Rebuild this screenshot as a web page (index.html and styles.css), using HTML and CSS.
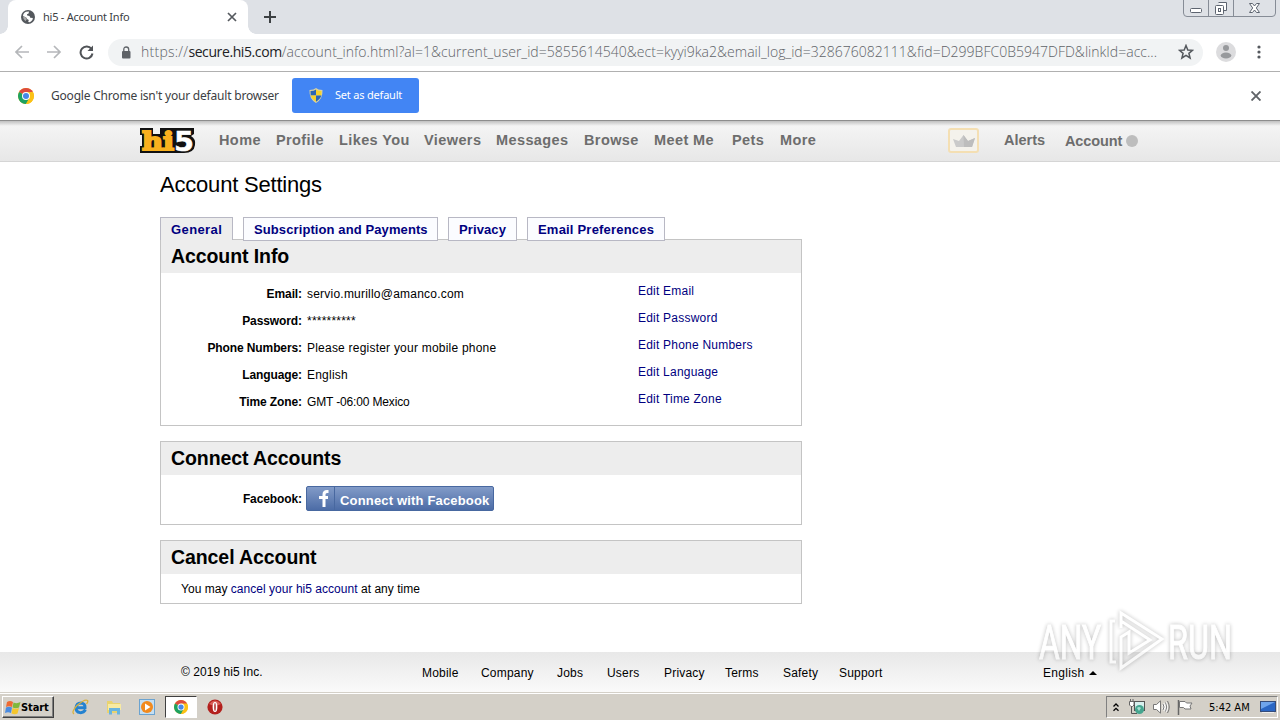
FILE: index.html
```html
<!DOCTYPE html>
<html lang="en">
<head>
  <meta charset="UTF-8" />
  <title>hi5 - Account Info</title>
  <link rel="stylesheet" href="styles.css">
</head>
<body>

  <!-- Shared icon -->
  <svg class="defs" width="0" height="0">
    <symbol id="chrome" viewBox="0 0 16 16">
      <circle cx="8" cy="8" r="8" fill="#fbc116"/>
      <path d="M8 8 L1.1 4 A8 8 0 0 1 14.9 4 Z" fill="#dd4b3e"/>
      <path d="M8 8 L1.1 4 A8 8 0 0 0 8 16 L11.4 10 Z" fill="#1da261"/>
      <path d="M8 4 L14.9 4 A8 8 0 0 1 8 16 L11.5 10 Z" fill="#fbc116"/>
      <circle cx="8" cy="8" r="4" fill="#fff"/>
      <circle cx="8" cy="8" r="3" fill="#4688e8"/>
    </symbol>
  </svg>

  <!-- Browser tabs -->
  <div class="tabstrip">
    <div class="tab">
      <svg width="14" height="14" viewBox="0 0 14 14"><circle cx="7" cy="7" r="7" fill="#54585d"/><path d="M2 6 Q2 3 5 1.7 L8 1.6 L7.6 3.4 L6 4.3 L6.2 5.6 L8.5 6 L9.3 7.8 L11.8 8 Q12 10.5 8.8 12.2 L7.2 12 L7.8 10 L6 9 L5.2 7.4 Z" fill="#fff"/><path d="M2 6.5 L5 7.6 L5.6 9.4 L4.5 11.3 Q2 9.4 2 6.5Z" fill="#aaa"/></svg>
      <span class="tab-title">hi5 - Account Info</span>
      <svg width="10" height="10" viewBox="0 0 10 10"><path d="M1 1 L9 9 M9 1 L1 9" stroke="#55595e" stroke-width="1.7"/></svg>
    </div>
    <svg class="new-tab" width="12" height="12" viewBox="0 0 12 12"><path d="M6 0 V12 M0 6 H12" stroke="#3c4043" stroke-width="2"/></svg>
    <svg class="window-buttons" width="94" height="18" viewBox="0 0 94 18" fill="none" stroke="#5d6470">
      <path d="M.5 0 V13 Q.5 16.5 4 16.5 H89 Q92.500 16.500 92.500 13 V0 M25.500 0 V16 M50.500 0 V16" stroke="#868c96"/>
      <rect x="7.500" y="8.500" width="11" height="4" rx="1" fill="#fff"/>
      <path d="M35.500 2.500 h8 v8 h-3" fill="#fff"/>
      <rect x="32.500" y="5.500" width="8" height="9" rx="1" fill="#fff"/>
      <rect x="35.500" y="8.500" width="2" height="3"/>
      <path d="M66.500 3.500 h3 l2 2.500 l2 -2.500 h3 l-3.200 4.500 l3.200 4.500 h-3 l-2 -2.500 l-2 2.500 h-3 l3.200 -4.500 z" fill="#fff"/>
    </svg>
  </div>

  <!-- Address bar -->
  <div class="toolbar">
    <svg class="nav-icons" width="80" height="16" viewBox="0 0 80 16" fill="none" stroke-width="1.700">
      <path d="M14 8 H1 M7 2 L1 8 L7 14" stroke="#b5b7ba"/>
      <path d="M32 8 H45 M39 2 L45 8 L39 14" stroke="#b5b7ba"/>
      <path d="M76.500 5 A6 6 0 1 0 77.500 9.500" stroke="#505357" stroke-width="2"/>
      <path d="M78 1.500 V7 H72.500 Z" fill="#505357"/>
    </svg>
    <div class="omnibox">
      <svg width="10" height="13" viewBox="0 0 10 13"><rect x="1" y="5" width="8.500" height="7.500" rx="1" fill="#5f6368"/><path d="M2.800 6 V3.500 Q2.800 1 5.200 1 Q7.700 1 7.700 3.500 V6" fill="none" stroke="#5f6368" stroke-width="1.300"/></svg>
      <span class="url"><span class="scheme">https://</span><b>secure.hi5.com</b><span class="path">/account_info.html?al=1&amp;current_user_id=5855614540&amp;ect=kyyi9ka2&amp;email_log_id=328676082111&amp;fid=D299BFC0B5947DFD&amp;linkId=acc...</span></span>
      <svg width="16" height="16" viewBox="0 0 16 16"><path d="M8 1.500 L9.800 6 L14.500 6.300 L10.900 9.300 L12.100 14 L8 11.400 L3.900 14 L5.100 9.300 L1.500 6.300 L6.200 6 Z" fill="none" stroke="#55595e" stroke-width="1.500"/></svg>
    </div>
    <svg class="avatar" width="20" height="20" viewBox="0 0 20 20"><circle cx="10" cy="10" r="10" fill="#dcdcde"/><circle cx="10" cy="6" r="3" fill="#97999c"/><ellipse cx="10" cy="13.500" rx="5.300" ry="3" fill="#97999c"/></svg>
    <svg width="4" height="14" viewBox="0 0 4 14" fill="#55595e"><circle cx="2" cy="2" r="1.600"/><circle cx="2" cy="7" r="1.600"/><circle cx="2" cy="12" r="1.600"/></svg>
  </div>

  <div class="infobar">
    <svg width="16" height="16"><use href="#chrome"/></svg>
    <span class="info-text">Google Chrome isn't your default browser</span>
    <div class="default-button">
      <svg width="14" height="15" viewBox="0 0 14 15"><path d="M7 0 Q9 2 13.500 2 Q14 11 7 15 Q0 11 .500 2 Q5 2 7 0Z" fill="#d9d3a4"/><path d="M7 1.500 V7.500 H1.700 L1.500 3 Q5 3 7 1.500Z" fill="#2b66b5"/><path d="M7 1.500 V7.500 H12.300 L12.500 3 Q9 3 7 1.500Z" fill="#f5d22c"/><path d="M7 7.500 V13.800 Q2.500 11 1.700 7.500Z" fill="#f5d22c"/><path d="M7 7.500 V13.800 Q11.500 11 12.300 7.500Z" fill="#2b66b5"/></svg>
      <span>Set as default</span>
    </div>
    <svg class="info-close" width="10" height="10" viewBox="0 0 10 10"><path d="M.500 .500 L9.500 9.500 M9.500 .500 L.500 9.500" stroke="#606468" stroke-width="1.900"/></svg>
  </div>

  <!-- Site header -->
  <div class="header">
    <svg class="logo" width="56" height="28" viewBox="0 0 56 28">
      <path d="M0 1 H13 V7 H20 V1 H54 V7 L51 9 Q56 12 55 18 Q54 26 44 26 H0 V19 H2 V8 H0Z" fill="#111"/>
      <text x="2" y="23" textLength="32" lengthAdjust="spacingAndGlyphs" class="logo-hi">hi</text>
      <text x="34" y="23.500" textLength="20" lengthAdjust="spacingAndGlyphs" class="logo-five">5</text>
    </svg>
    <div class="menu">
      <a>Home</a><a>Profile</a><a>Likes You</a><a>Viewers</a><a>Messages</a><a>Browse</a><a>Meet Me</a><a>Pets</a><a>More</a>
    </div>
    <div class="vip"><svg width="22" height="12" viewBox="0 0 22 12"><path d="M0 4 L6 6 L10.500 0 L15 6 L22 3 L19 12 H3Z" fill="#cacaca"/><path d="M10.500 0 L15 6 L22 3 L19 12 H11Z" fill="#bdbdbd"/></svg></div>
    <a class="alerts">Alerts</a>
    <a class="account">Account</a>
    <span class="dot"></span>
  </div>

  <div class="content">
    <h1>Account Settings</h1>
    <div class="tabs">
      <a class="active">General</a>
      <a class="subscription">Subscription and Payments</a>
      <a class="privacy">Privacy</a>
      <a class="preferences">Email Preferences</a>
    </div>

    <div class="panel info">
      <h2>Account Info</h2>
      <div class="row"><label>Email:</label><span>servio.murillo@amanco.com</span><a>Edit Email</a></div>
      <div class="row"><label>Password:</label><span>**********</span><a>Edit Password</a></div>
      <div class="row"><label>Phone Numbers:</label><span>Please register your mobile phone</span><a>Edit Phone Numbers</a></div>
      <div class="row"><label>Language:</label><span>English</span><a>Edit Language</a></div>
      <div class="row"><label>Time Zone:</label><span class="zone">GMT -06:00 Mexico</span><a>Edit Time Zone</a></div>
    </div>

    <div class="panel connect">
      <h2>Connect Accounts</h2>
      <div class="connect-row">
        <label>Facebook:</label>
        <div class="facebook">
          <span class="fb-icon"><svg width="10" height="17" viewBox="0 0 10 17"><path d="M9.500 1.500 H8 Q5 1.500 5 4.500 V17 M0 7.500 H9" fill="none" stroke="#fff" stroke-width="3"/></svg></span>
          <span class="fb-text">Connect with Facebook</span>
        </div>
      </div>
    </div>

    <div class="panel cancel">
      <h2>Cancel Account</h2>
      <p>You may <a>cancel your hi5 account</a> at any time</p>
    </div>
  </div>

  <!-- Footer -->
  <div class="footer">
    <span class="copyright">© 2019 hi5 Inc.</span>
    <div class="footer-links">
      <a>Mobile</a><a>Company</a><a>Jobs</a><a>Users</a><a>Privacy</a><a>Terms</a><a>Safety</a><a>Support</a>
    </div>
    <span class="language">English</span>
    <span class="arrow"></span>
  </div>

  <!-- Taskbar -->
  <div class="taskbar">
    <div class="start">
      <svg width="16" height="15" viewBox="0 0 16 15"><path d="M2 2 Q5 0 8 2 L7 7 Q4 5.500 1 7Z" fill="#ee6a32"/><path d="M8.500 2.500 Q12 4 15.500 2 L14 7.500 Q11 9 7.500 7.500Z" fill="#7fb83b"/><path d="M1 7.500 Q4 6 7 7.500 L6 13 Q3 11.500 0 13Z" fill="#4a8be0"/><path d="M7.500 8 Q11 9.500 14 8 L12.500 13.500 Q10 15 6.500 13.500Z" fill="#f5c62d"/></svg>
      <span>Start</span>
    </div>
    <svg class="ie" width="17" height="16" viewBox="0 0 17 16"><path d="M13.500 10.800 Q11.500 14 8 13.600 Q3.800 13 4 8.800 Q4.500 4 9 4 Q13.500 4.500 13 8.800 H5" fill="none" stroke="#2482d0" stroke-width="3"/><path d="M2 15 Q-1 13 5 6.500 Q13 -.500 15.500 1.500 Q16.500 2.500 14.500 5" fill="none" stroke="#d9b13c" stroke-width="1.300"/></svg>
    <svg class="folder" width="16" height="16" viewBox="0 0 16 16"><path d="M1 2 H6 L7 4 H14 V14 H1Z" fill="#e9d36f"/><path d="M2 5 H15 V11 H2Z" fill="#f7eaa2"/><path d="M3 9 H14 V15.500 H11 V12 H6 V15.500 H3Z" fill="#69b4df"/></svg>
    <svg class="player" width="16" height="16" viewBox="0 0 16 16"><rect x=".500" y=".500" width="15" height="15" fill="#c5dff2" stroke="#6ba3d0"/><circle cx="8" cy="8" r="6" fill="#f28a1d"/><path d="M6 4.500 L11.500 8 L6 11.500Z" fill="#fff"/></svg>
    <div class="chrome-task"><svg width="14" height="14"><use href="#chrome"/></svg></div>
    <svg class="opera" width="16" height="16" viewBox="0 0 16 16"><circle cx="8" cy="8" r="7.600" fill="#b3201d"/><path d="M2 5 Q8 -2 14 5 Q8 8 2 5" fill="#d9605a"/><ellipse cx="8" cy="8" rx="2.400" ry="5" fill="#fff"/><ellipse cx="8" cy="8" rx=".7" ry="4" fill="#a41615"/></svg>
    <div class="tray">
      <svg width="6" height="9" viewBox="0 0 6 9"><path d="M.500 3.500 L3 1 L5.500 3.500 M.500 7.800 L3 5.300 L5.500 7.800" fill="none" stroke="#000" stroke-width="1.300"/></svg>
      <svg class="network" width="16" height="16" viewBox="0 0 16 16"><rect x="5.500" y="2.500" width="10" height="9" fill="#d7f0ee" stroke="#555"/><path d="M2.500 7 V14.500 H8" fill="none" stroke="#555"/><path d="M.500 2.500 H5 V6 L3.500 7.500 H2 L.500 6Z M1.500 0 V3 M4 0 V3" fill="#fff" stroke="#666"/><circle cx="10.500" cy="10.500" r="4.500" fill="#45a58f"/><path d="M8 9 Q10 7 12 9 L10 12Z" fill="#a5ded0"/></svg>
      <svg class="volume" width="17" height="14" viewBox="0 0 17 14"><path d="M.500 4.500 H3.500 L7.500 .800 V13.200 L3.500 9.500 H.500Z" fill="#fff" stroke="#777"/><path d="M10 4 Q12 7 10 10 M12.500 2.500 Q15 7 12.500 11.500" fill="none" stroke="#fff" stroke-width="2.500"/><path d="M10 4 Q12 7 10 10 M12.500 2.500 Q15 7 12.500 11.500 M14.500 1 Q18 7 14.500 13" fill="none" stroke="#777"/></svg>
      <svg class="flag" width="16" height="15" viewBox="0 0 16 15"><path d="M1.500 0 V15" stroke="#666" stroke-width="1.500"/><path d="M2.500 1.500 H8 L9.500 3 H15 L13 6 L14 9 H8 L6.500 7.500 H2.500Z" fill="#fff" stroke="#777"/></svg>
      <span class="clock">5:42 AM</span>
      <svg class="desktop" width="16" height="12" viewBox="0 0 16 12"><rect x=".500" y=".500" width="15" height="10" fill="#2b67c4" stroke="#354c79"/><path d="M1 1 H15 L1 8Z" fill="#6fa5ec"/><path d="M2 11.500 H14" stroke="#eee"/></svg>
    </div>
  </div>

  <!-- Watermark over the page -->
  <svg class="watermark" width="230" height="76" viewBox="0 0 230 76">
    <g fill="none" stroke="#fff" stroke-width="3">
      <text x="10" y="55" textLength="62" lengthAdjust="spacingAndGlyphs">ANY</text>
      <text x="139" y="55" textLength="64" lengthAdjust="spacingAndGlyphs">RUN</text>
      <path d="M92 24 V9 L133 35 L92 64 V33 L100 28 V49 L121 36 L92 17 M86 17 H82 V58 H87"/>
    </g>
  </svg>

</body>
</html>
```
FILE: styles.css
```css
* { box-sizing: border-box; }
body { margin: 0; width: 1280px; height: 720px; overflow: hidden; background: #fff; font-family: "Liberation Sans", Arial, sans-serif; font-size: 12px; color: #000; display: flex; flex-direction: column; position: relative; }
svg { display: block; flex: none; }
.defs { position: absolute; }
a { color: #000080; white-space: nowrap; }

/* browser */
.tabstrip, .toolbar, .infobar { font-family: "Noto Sans", Tahoma, sans-serif; white-space: nowrap; }
.tabstrip { height: 34px; flex: none; background: #dee1e6; display: flex; padding-left: 8px; }
.tab { width: 240px; height: 34px; background: #fff; border-radius: 8px 8px 0 0; display: flex; align-items: center; padding: 0 11px 0 13px; position: relative; }
.tab::before, .tab::after { content: ""; position: absolute; bottom: 0; width: 8px; height: 8px; }
.tab::before { left: -8px; background: radial-gradient(circle at 0 0, #dee1e6 7.5px, #fff 8px); }
.tab::after { right: -8px; background: radial-gradient(circle at 100% 0, #dee1e6 7.5px, #fff 8px); }
.tab-title { flex: 1; margin: -2px 0 0 8px; font-size: 11px; letter-spacing: -0.25px; color: #3c4043; }
.new-tab { margin: 11px 0 0 16px; }
.window-buttons { margin-left: auto; margin-right: 3px; }
.toolbar { height: 38px; flex: none; border-bottom: 1px solid #b0b0b0; display: flex; align-items: center; padding: 0 0 1px 15px; }
.omnibox { width: 1095px; height: 27px; margin-left: 13px; border-radius: 14px; background: #f1f3f4; display: flex; align-items: center; padding-left: 13px; }
.url { width: 1037px; margin: -1px 0 0 10px; font-family: "Open Sans", Tahoma, sans-serif; font-size: 14px; font-weight: 300; color: #5f6368; }
.url .scheme { letter-spacing: 0.25px; }
.url b { font-weight: 400; color: #202124; letter-spacing: -0.4px; }
.url .path { letter-spacing: 0.02px; }
.avatar { margin: 0 21px 0 13px; }
.infobar { height: 48px; flex: none; display: flex; align-items: center; padding: 0 0 1px 18px; }
.info-text { width: 241px; margin-left: 17px; font-size: 12px; letter-spacing: -0.2px; color: #3c4043; }
.default-button { width: 127px; height: 35px; border-radius: 3px; background: #4285f4; color: #fff; display: flex; align-items: center; padding-left: 17px; font-size: 11px; letter-spacing: -0.2px; }
.default-button span { margin: -2px 0 0 12px; }
.info-close { margin-left: auto; margin-right: 19px; }

/* site header */
.header { height: 42px; flex: none; border-top: 1px solid #8d8d8d; border-bottom: 1px solid #d5d5d5; background: linear-gradient(#c0c0c0 0, #f4f4f4 5px, #e7e7e7 100%); display: flex; align-items: flex-start; padding-left: 140px; }
.header a { color: #6d6d6d; font-size: 14.5px; font-weight: bold; letter-spacing: 0.4px; line-height: 16px; }
.logo { margin-top: 6px; }
.logo-hi { font-family: "DejaVu Serif", serif; font-weight: bold; font-size: 25px; fill: #f9b11e; stroke: #f9b11e; stroke-width: 2px; }
.logo-five { font-family: "DejaVu Sans", sans-serif; font-weight: bold; font-size: 27px; fill: #fff; stroke: #fff; stroke-width: 0.5px; }
.menu { display: grid; grid-template-columns: 57px 63px 85px 72px 88px 70px 78px 48px 40px; margin: 11px 0 0 23px; }
.vip { width: 31px; height: 25px; margin: 7px 0 0 128px; border: 2px solid #f4dfb3; border-radius: 3px; background: #f4f2ec; display: flex; align-items: center; justify-content: center; }
.header .alerts { width: 61px; margin: 11px 0 0 25px; letter-spacing: 0; }
.header .account { width: 61px; margin-top: 12px; letter-spacing: -0.1px; }
.dot { width: 12px; height: 12px; margin-top: 14px; border-radius: 50%; background: #bdbdbd; }

/* account page */
.content { width: 642px; height: 490px; flex: none; margin-left: 160px; padding-top: 10px; }
h1 { margin: 0; height: 45px; font-size: 22px; font-weight: normal; line-height: 26px; letter-spacing: -0.2px; }
.tabs { display: flex; gap: 10px; height: 22px; position: relative; z-index: 1; }
.tabs a { height: 24px; border: 1px solid #b8b8c4; padding-left: 10px; background: #fbfcff; font-size: 13px; font-weight: bold; line-height: 23px; letter-spacing: 0.1px; }
.tabs .active { width: 73px; height: 23px; border-bottom: none; background: #ededed; letter-spacing: 0.4px; }
.subscription { width: 195px; }
.privacy { width: 69px; }
.tabs .preferences { width: 138px; letter-spacing: 0.2px; }
.panel { border: 1px solid #c4c4c4; margin-bottom: 15px; }
.panel h2 { margin: 0; height: 33px; padding-left: 10px; background: #ededed; font-size: 19.5px; line-height: 33px; letter-spacing: -0.08px; }
.info { height: 187px; }
.connect { height: 84px; }
.cancel { height: 64px; }
.row { display: flex; height: 27px; padding-top: 14px; line-height: 14px; letter-spacing: 0.22px; }
.row label, .connect-row label { width: 141px; text-align: right; font-weight: bold; letter-spacing: -0.1px; }
.row span { width: 331px; margin-left: 5px; }
.row .zone { letter-spacing: -0.15px; }
.row a { margin-top: -3px; }
.connect-row { display: flex; padding-top: 11px; line-height: 27px; }
.facebook { width: 188px; height: 25px; margin-left: 4px; border: 1px solid #4868a0; border-radius: 2px; background: linear-gradient(#829bc8, #4c6ca6); display: flex; color: #fff; }
.fb-icon { width: 28px; flex: none; border-right: 1px solid #4868a0; padding: 3px 0 0 12px; }
.fb-text { margin-left: 5px; font-size: 13px; font-weight: bold; letter-spacing: 0.17px; white-space: nowrap; }
.cancel p { margin: 8px 0 0 20px; line-height: 14px; letter-spacing: 0.03px; }

/* footer */
.footer { height: 40px; flex: none; background: linear-gradient(#e8e8e8, #fafafa); display: flex; padding: 13px 0 0 181px; line-height: 15px; letter-spacing: 0.2px; }
.footer a { color: #000; }
.copyright { width: 241px; letter-spacing: 0.05px; }
.footer-links { display: grid; grid-template-columns: 59px 76px 50px 57px 61px 58px 56px 204px; padding-top: 1px; }
.language { width: 46px; padding-top: 1px; letter-spacing: 0.3px; }
.arrow { width: 0; height: 0; margin-top: 6px; border: 4px solid transparent; border-top: none; border-bottom-color: #000; }

/* taskbar */
.taskbar { height: 28px; flex: none; background: #d4d0c8; border-top: 1px solid #d4d0c8; box-shadow: inset 0 1px #fff; display: flex; align-items: center; padding: 1px 2px 0; font-family: "DejaVu Sans Condensed", "DejaVu Sans", Tahoma, sans-serif; font-size: 11px; }
.start { width: 52px; height: 22px; border: 1px solid; border-color: #fff #404040 #404040 #fff; box-shadow: inset -1px -1px #808080; display: flex; align-items: center; padding-left: 2px; font-weight: bold; }
.start span { letter-spacing: -0.1px; }
.ie { margin-left: 18px; }
.folder { margin-left: 17px; }
.player { margin-left: 17px; }
.chrome-task { width: 32px; height: 22px; margin-left: 10px; border: 1px solid; border-color: #404040 #fff #fff #404040; background: #fff; display: flex; align-items: center; justify-content: center; }
.opera { margin-left: 10px; }
.tray { width: 172px; height: 22px; margin-left: auto; border: 1px solid; border-color: #808080 #fff #fff #808080; display: flex; align-items: center; padding-left: 6px; }
.network { margin-left: 10px; }
.volume { margin-left: 8px; }
.flag { margin-left: 7px; }
.clock { width: 51px; margin-left: 16px; white-space: nowrap; letter-spacing: 0; }

.watermark { position: absolute; left: 1029px; top: 604px; filter: drop-shadow(0 0 2px rgba(0, 0, 0, 0.4)); opacity: 0.65; z-index: 5; }
.watermark text { font-family: Roboto, sans-serif; font-size: 48px; stroke-width: 1px; fill: #fff; }
```
